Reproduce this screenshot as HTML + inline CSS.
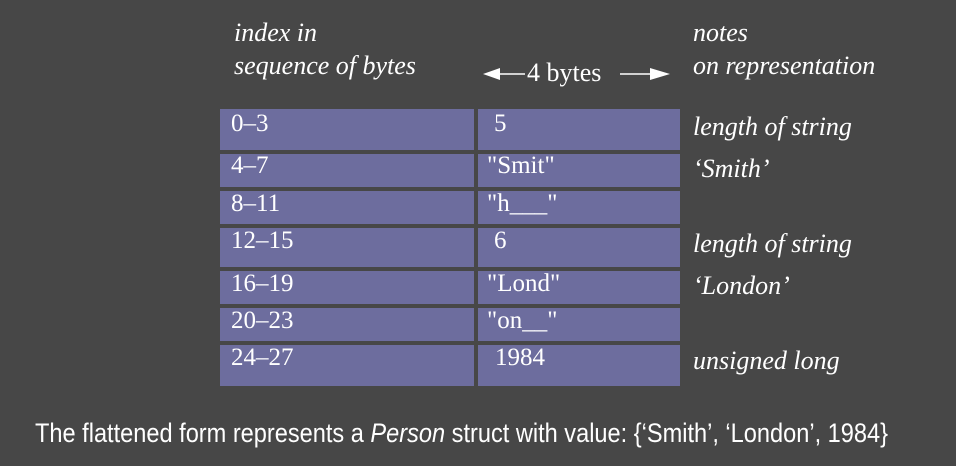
<!DOCTYPE html>
<html><head><style>
body{margin:0;width:956px;height:466px;background:#474747;position:relative;overflow:hidden;font-family:"Liberation Serif",serif;color:#fff}
.t{position:absolute;font-size:25px;line-height:1;white-space:pre}
.i{font-style:italic;font-size:26px}
.c{position:absolute;background:#6d6d9e}
.bot{position:absolute;left:35px;top:420px;font-family:"Liberation Sans",sans-serif;font-size:27px;line-height:1;white-space:pre;color:#fff;transform:scaleX(0.873);transform-origin:0 0}
</style></head><body>
<div class="t i" style="left:234px;top:20px">index in</div>
<div class="t i" style="left:234px;top:53px">sequence of bytes</div>
<div class="t i" style="left:693px;top:20px">notes</div>
<div class="t i" style="left:693px;top:53px">on representation</div>
<div class="t" style="left:527px;top:60px;font-size:26px">4 bytes</div>
<svg style="position:absolute;left:480px;top:62px" width="200" height="24">
<line x1="14" y1="12" x2="45" y2="12" stroke="#fff" stroke-width="1.5"/>
<polygon points="3,12 20,6 20,18" fill="#fff"/>
<line x1="140" y1="12" x2="175" y2="12" stroke="#fff" stroke-width="1.5"/>
<polygon points="190,12 170,6 170,18" fill="#fff"/>
</svg>

<div class="c" style="left:220px;top:109px;width:254px;height:41px"></div>
<div class="c" style="left:478px;top:109px;width:202px;height:41px"></div>
<div class="c" style="left:220px;top:154px;width:254px;height:33px"></div>
<div class="c" style="left:478px;top:154px;width:202px;height:33px"></div>
<div class="c" style="left:220px;top:191px;width:254px;height:33px"></div>
<div class="c" style="left:478px;top:191px;width:202px;height:33px"></div>
<div class="c" style="left:220px;top:228px;width:254px;height:39px"></div>
<div class="c" style="left:478px;top:228px;width:202px;height:39px"></div>
<div class="c" style="left:220px;top:271px;width:254px;height:33px"></div>
<div class="c" style="left:478px;top:271px;width:202px;height:33px"></div>
<div class="c" style="left:220px;top:308px;width:254px;height:33px"></div>
<div class="c" style="left:478px;top:308px;width:202px;height:33px"></div>
<div class="c" style="left:220px;top:345px;width:254px;height:41px"></div>
<div class="c" style="left:478px;top:345px;width:202px;height:41px"></div>

<div class="t" style="left:231px;top:111px">0–3</div>
<div class="t" style="left:494px;top:111px">5</div>
<div class="t" style="left:231px;top:153px">4–7</div>
<div class="t" style="left:487px;top:153px">"Smit"</div>
<div class="t" style="left:231px;top:191px">8–11</div>
<div class="t" style="left:487px;top:191px">"h___"</div>
<div class="t" style="left:231px;top:228px">12–15</div>
<div class="t" style="left:494px;top:228px">6</div>
<div class="t" style="left:231px;top:271px">16–19</div>
<div class="t" style="left:487px;top:271px">"Lond"</div>
<div class="t" style="left:231px;top:308px">20–23</div>
<div class="t" style="left:487px;top:308px">"on__"</div>
<div class="t" style="left:231px;top:345px">24–27</div>
<div class="t" style="left:495px;top:345px">1984</div>

<div class="t i" style="left:693px;top:114px">length of string</div>
<div class="t i" style="left:693px;top:156px">‘Smith’</div>
<div class="t i" style="left:693px;top:231px">length of string</div>
<div class="t i" style="left:693px;top:273px">‘London’</div>
<div class="t i" style="left:693px;top:348px">unsigned long</div>

<div class="bot">The flattened form represents a <i>Person</i> struct with value: {‘Smith’, ‘London’, 1984}</div>
</body></html>
